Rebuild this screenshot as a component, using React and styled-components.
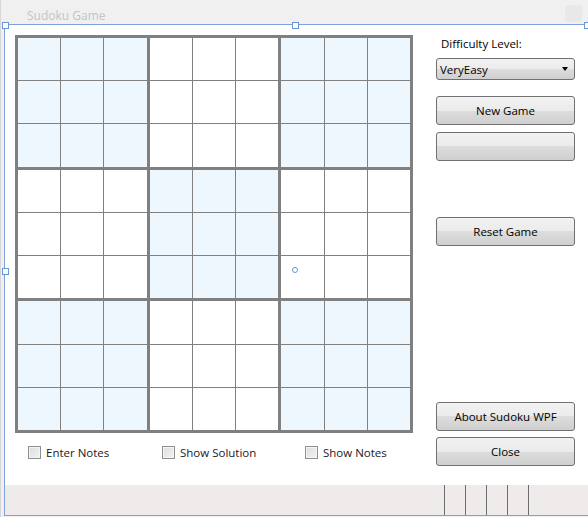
import styled, { createGlobalStyle } from 'styled-components';

const GlobalStyle = createGlobalStyle`
  html, body {
    margin: 0;
    padding: 0;
    background: #f0f0f0;
  }
  body {
    font-family: "Open Sans", "Noto Sans", "Liberation Sans", sans-serif;
    font-size: 11.5px;
    color: #000;
  }
`;

const blocks = [true, false, true, false, true, false, true, false, true];

function App() {
  return (
    <Page>
      <GlobalStyle />
      <TitleBar>
        <Title>Sudoku Game</Title>
        <GhostButton />
      </TitleBar>
      <Window>
        <Content>
          <LeftColumn>
            <Board>
              {blocks.map((tinted, b) => (
                <Block key={b}>
                  {Array.from({ length: 9 }).map((_, c) => (
                    <Cell key={c} $tinted={tinted} />
                  ))}
                </Block>
              ))}
            </Board>
            <Options>
              <Option><CheckBox />Enter Notes</Option>
              <Option><CheckBox />Show Solution</Option>
              <Option><CheckBox />Show Notes</Option>
            </Options>
          </LeftColumn>
          <RightColumn>
            <Label>Difficulty Level:</Label>
            <Select>
              <span>VeryEasy</span>
              <Arrow />
            </Select>
            <Button $top={16}>New Game</Button>
            <Button $top={7} />
            <Button $top={56}>Reset Game</Button>
            <Spacer />
            <Button>About Sudoku WPF</Button>
            <Button $top={6}>Close</Button>
          </RightColumn>
        </Content>
        <StatusStrip>
          <Separators>
            <Sep /><Sep /><Sep /><Sep /><Sep />
          </Separators>
        </StatusStrip>
        <Handle style={{ left: -3, top: -3 }} />
        <Handle style={{ left: 287, top: -3 }} />
        <Handle style={{ right: -3, top: -3 }} />
        <Handle style={{ left: -3, top: 243 }} />
        <CenterRing />
      </Window>
    </Page>
  );
}

const Page = styled.div`
  position: relative;
  width: 588px;
  height: 517px;
  overflow: hidden;
  background: #f0f0f0;
  border-left: 1px solid #d6d6d6;
  box-sizing: border-box;
`;

const TitleBar = styled.div`
  height: 24px;
  display: flex;
  align-items: center;
  justify-content: space-between;
  padding: 0 6px 0 26px;
`;

const Title = styled.div`
  font-size: 12px;
  color: #c4c4c4;
  margin-top: 6px;
`;

const GhostButton = styled.div`
  width: 17px;
  height: 17px;
  border-radius: 3px;
  background: #e8e8e8;
  margin-top: 3px;
`;

const Window = styled.div`
  position: relative;
  margin-left: 3px;
  width: 584px;
  height: 492px;
  border: 1px solid #7ea3dc;
  border-right: none;
  box-sizing: border-box;
  display: flex;
  flex-direction: column;
  background: #fff;
`;

const Content = styled.div`
  display: flex;
  height: 460px;
  padding: 10px 0 0 10px;
  box-sizing: border-box;
  gap: 23px;
`;

const LeftColumn = styled.div`
  display: flex;
  flex-direction: column;
`;

const Board = styled.div`
  width: 398px;
  height: 398px;
  box-sizing: border-box;
  background: #808080;
  padding: 3px;
  display: grid;
  grid-template-columns: repeat(3, 1fr);
  grid-template-rows: repeat(3, 1fr);
  gap: 3px;
`;

const Block = styled.div`
  display: grid;
  grid-template-columns: repeat(3, 1fr);
  grid-template-rows: repeat(3, 1fr);
  gap: 1px;
  background: #808080;
`;

const Cell = styled.div`
  background: ${p => (p.$tinted ? '#eef6fe' : '#ffffff')};
`;

const Options = styled.div`
  display: grid;
  grid-template-columns: 134px 143px auto;
  padding: 12px 0 0 13px;
`;

const Option = styled.label`
  display: flex;
  align-items: center;
  gap: 5px;
  color: #1a1a1a;
`;

const CheckBox = styled.span`
  width: 11px;
  height: 11px;
  border: 1px solid #8e8f8f;
  background: linear-gradient(135deg, #dcdcdc, #f4f4f4);
  box-shadow: inset 0 0 0 1px #f4f4f4;
`;

const RightColumn = styled.div`
  width: 139px;
  display: flex;
  flex-direction: column;
  padding-bottom: 19px;
`;

const Label = styled.div`
  height: 18px;
  line-height: 18px;
  padding-left: 5px;
`;

const Select = styled.div`
  margin-top: 5px;
  height: 22px;
  box-sizing: border-box;
  border: 1px solid #707070;
  border-radius: 3px;
  background: linear-gradient(#f2f2f2 0%, #ebebeb 50%, #dddddd 50%, #cfcfcf 100%);
  display: flex;
  align-items: center;
  justify-content: space-between;
  padding: 0 6px 0 3px;
`;

const Arrow = styled.span`
  width: 0;
  height: 0;
  border-left: 3.5px solid transparent;
  border-right: 3.5px solid transparent;
  border-top: 4px solid #000;
`;

const Button = styled.div`
  margin-top: ${p => p.$top || 0}px;
  height: 29px;
  box-sizing: border-box;
  border: 1px solid #707070;
  border-radius: 3px;
  background: linear-gradient(#f2f2f2 0%, #ebebeb 50%, #dddddd 50%, #cfcfcf 100%);
  display: flex;
  align-items: center;
  justify-content: center;
`;

const Spacer = styled.div`
  flex: 1;
`;

const StatusStrip = styled.div`
  height: 30px;
  background: #efebeb;
  display: flex;
  padding-left: 439px;
`;

const Separators = styled.div`
  display: flex;
  gap: 20px;
`;

const Sep = styled.div`
  width: 1px;
  height: 100%;
  background: #6d6d6d;
`;

const Handle = styled.div`
  position: absolute;
  width: 5px;
  height: 5px;
  border: 1px solid #6a94d8;
  background: #fff;
`;

const CenterRing = styled.div`
  position: absolute;
  left: 287px;
  top: 242px;
  width: 4px;
  height: 4px;
  border: 1px solid #6a94d8;
  border-radius: 50%;
  background: #fff;
`;

export default App;
